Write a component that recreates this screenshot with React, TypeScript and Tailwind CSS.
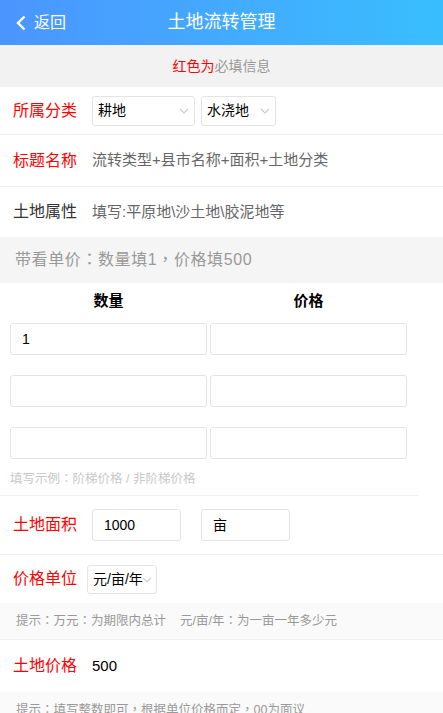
function Chevron({ className }: { className?: string }) {
  return (
    <svg className={className} width="10" height="6" viewBox="0 0 10 6" fill="none">
      <polyline points="1,1 5,5 9,1" stroke="#cccccc" strokeWidth="1.2" />
    </svg>
  );
}

function Select({ value, width }: { value: string; width: string }) {
  return (
    <div className={`flex h-[30px] items-center justify-between rounded-[3px] border border-[#e4e4e4] bg-white pl-[5px] pr-[5px] ${width}`}>
      <span className="text-[14px] text-black">{value}</span>
      <Chevron />
    </div>
  );
}

function Box({ value, className }: { value?: string; className: string }) {
  return (
    <div className={`flex h-[32px] items-center rounded-[3px] border border-[#e4e4e4] bg-white px-[11px] text-[14px] text-black ${className}`}>
      {value}
    </div>
  );
}

// lines with full-width punctuation use the TC face, whose colon/comma sit centred
const punct = "font-['Liberation_Sans','Noto_Sans_CJK_TC',sans-serif]";

export default function App() {
  return (
    <div className="w-[443px] h-[713px] overflow-hidden bg-white font-['Liberation_Sans','Noto_Sans_CJK_SC',sans-serif]">
      {/* Header */}
      <div className="grid h-[45px] grid-cols-[1fr_auto_1fr] items-center bg-gradient-to-r from-[#4b95fe] to-[#38befe] text-white">
        <div className="flex items-center pl-[16px]">
          <svg width="10" height="16" viewBox="0 0 10 16" fill="none">
            <polyline points="8.5,1.5 2,8 8.5,14.5" stroke="white" strokeWidth="2.4" />
          </svg>
          <span className="ml-[8px] text-[16px]">返回</span>
        </div>
        <div className="text-[18px]">土地流转管理</div>
        <div />
      </div>

      {/* Notice */}
      <div className="flex h-[42px] items-center justify-center bg-[#f2f2f2] text-[14px]">
        <span className="text-[#ff0000]">红色为</span>
        <span className="text-[#999999]">必填信息</span>
      </div>

      {/* 所属分类 */}
      <div className="flex h-[48px] items-center border-b border-[#efefef] pl-[13px]">
        <div className="w-[79px] shrink-0 text-[16px] text-[#ff0000]">所属分类</div>
        <Select value="耕地" width="w-[103px]" />
        <div className="w-[6px]" />
        <Select value="水浇地" width="w-[75px]" />
      </div>

      {/* 标题名称 */}
      <div className="flex h-[52px] items-center border-b border-[#efefef] pl-[13px]">
        <div className="w-[79px] shrink-0 text-[16px] text-[#ff0000]">标题名称</div>
        <div className="text-[15px] text-[#666666]">流转类型+县市名称+面积+土地分类</div>
      </div>

      {/* 土地属性 */}
      <div className="flex h-[50px] items-center pl-[13px]">
        <div className="w-[79px] shrink-0 text-[16px] text-[#333333]">土地属性</div>
        <div className="text-[15px] text-[#666666]">填写:平原地\沙土地\胶泥地等</div>
      </div>

      {/* 带看单价 */}
      <div className={`flex h-[46px] items-center bg-[#f5f5f5] pl-[15px] text-[16px] tracking-[0.6px] text-[#999999] ${punct}`}>
        带看单价：数量填1，价格填500
      </div>

      {/* 数量 / 价格 table */}
      <div className="w-[419px] border-b border-[#efefef] px-[10px]">
        <div className="mb-[4px] grid h-[36px] grid-cols-[197px_197px] items-center gap-x-[3px] text-center text-[15px] font-bold text-black">
          <div>数量</div>
          <div>价格</div>
        </div>
        <div className="grid grid-cols-[197px_197px] gap-x-[3px] gap-y-[20px]">
          <Box value="1" className="w-full" />
          <Box className="w-full" />
          <Box className="w-full" />
          <Box className="w-full" />
          <Box className="w-full" />
          <Box className="w-full" />
        </div>
        <div className={`pb-[8px] pt-[12px] text-[12.5px] leading-[16px] text-[#c8c8c8] ${punct}`}>
          填写示例：阶梯价格 / 非阶梯价格
        </div>
      </div>

      {/* 土地面积 */}
      <div className="flex h-[59px] items-center border-b border-[#efefef] pl-[13px]">
        <div className="w-[79px] shrink-0 text-[16px] text-[#ff0000]">土地面积</div>
        <Box value="1000" className="w-[89px]" />
        <div className="w-[20px]" />
        <Box value="亩" className="w-[89px]" />
      </div>

      {/* 价格单位 */}
      <div className="flex h-[48px] items-center pl-[13px]">
        <div className="w-[74px] shrink-0 text-[16px] text-[#ff0000]">价格单位</div>
        <div className="flex h-[29px] w-[70px] items-center rounded-[3px] border border-[#e4e4e4] pl-[5px]">
          <span className="text-[14px] text-black">元/亩/年</span>
          <Chevron className="-ml-[1px] mt-[1px]" />
        </div>
      </div>

      {/* 提示 1 */}
      <div className={`flex h-[37px] items-center border-b border-[#efefef] bg-[#fafafa] pl-[16px] text-[12.5px] text-[#999999] ${punct}`}>
        提示：万元：为期限内总计<span className="ml-[14px]">元/亩/年：为一亩一年多少元</span>
      </div>

      {/* 土地价格 */}
      <div className="flex h-[52px] items-center pl-[13px]">
        <div className="w-[79px] shrink-0 text-[16px] text-[#ff0000]">土地价格</div>
        <div className="text-[15px] text-black">500</div>
      </div>

      {/* 提示 2 */}
      <div className={`flex h-[36px] items-center bg-[#fafafa] pl-[16px] text-[12.5px] text-[#999999] ${punct}`}>
        提示：填写整数即可，根据单位价格而定，00为面议
      </div>
    </div>
  );
}
